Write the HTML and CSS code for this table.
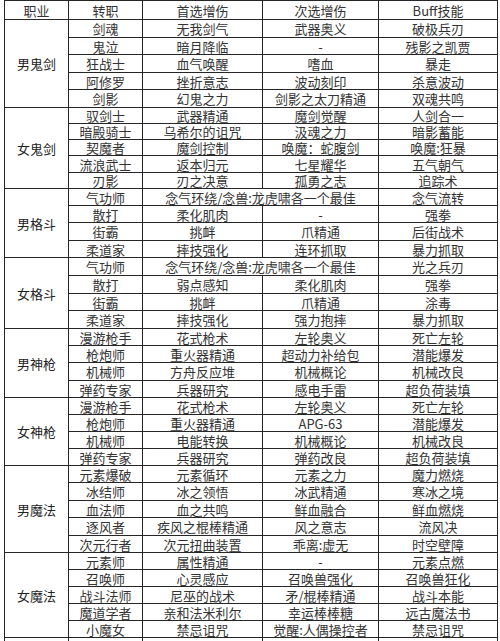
FILE: index.html
```html
<!DOCTYPE html>
<html lang="zh-CN">
<head>
<meta charset="utf-8">
<title>职业增伤与Buff技能</title>
<link rel="stylesheet" href="styles.css">
</head>
<body>
<div class="page">
  <div class="grid" role="table">
    <div class="cell head">职业</div><div class="cell head">转职</div><div class="cell head">首选增伤</div><div class="cell head">次选增伤</div><div class="cell head">Buff技能</div>

    <div class="cell job span5">男鬼剑</div>
    <div class="cell">剑魂</div><div class="cell">无我剑气</div><div class="cell">武器奥义</div><div class="cell">破极兵刃</div>
    <div class="cell">鬼泣</div><div class="cell">暗月降临</div><div class="cell">-</div><div class="cell">残影之凯贾</div>
    <div class="cell">狂战士</div><div class="cell">血气唤醒</div><div class="cell">嗜血</div><div class="cell">暴走</div>
    <div class="cell">阿修罗</div><div class="cell">挫折意志</div><div class="cell">波动刻印</div><div class="cell">杀意波动</div>
    <div class="cell">剑影</div><div class="cell">幻鬼之力</div><div class="cell">剑影之太刀精通</div><div class="cell">双魂共鸣</div>

    <div class="cell job span5">女鬼剑</div>
    <div class="cell">驭剑士</div><div class="cell">武器精通</div><div class="cell">魔剑觉醒</div><div class="cell">人剑合一</div>
    <div class="cell">暗殿骑士</div><div class="cell">乌希尔的诅咒</div><div class="cell">汲魂之力</div><div class="cell">暗影蓄能</div>
    <div class="cell">契魔者</div><div class="cell">魔剑控制</div><div class="cell">唤魔：蛇腹剑</div><div class="cell">唤魔:狂暴</div>
    <div class="cell">流浪武士</div><div class="cell">返本归元</div><div class="cell">七星耀华</div><div class="cell">五气朝气</div>
    <div class="cell">刃影</div><div class="cell">刃之决意</div><div class="cell">孤勇之志</div><div class="cell">追踪术</div>

    <div class="cell job span4">男格斗</div>
    <div class="cell">气功师</div><div class="cell wide">念气环绕/念兽:龙虎啸各一个最佳</div><div class="cell">念气流转</div>
    <div class="cell">散打</div><div class="cell">柔化肌肉</div><div class="cell">-</div><div class="cell">强拳</div>
    <div class="cell">街霸</div><div class="cell">挑衅</div><div class="cell">爪精通</div><div class="cell">后街战术</div>
    <div class="cell">柔道家</div><div class="cell">摔技强化</div><div class="cell">连环抓取</div><div class="cell">暴力抓取</div>

    <div class="cell job span4">女格斗</div>
    <div class="cell">气功师</div><div class="cell wide">念气环绕/念兽:龙虎啸各一个最佳</div><div class="cell">光之兵刃</div>
    <div class="cell">散打</div><div class="cell">弱点感知</div><div class="cell">柔化肌肉</div><div class="cell">强拳</div>
    <div class="cell">街霸</div><div class="cell">挑衅</div><div class="cell">爪精通</div><div class="cell">涂毒</div>
    <div class="cell">柔道家</div><div class="cell">摔技强化</div><div class="cell">强力抱摔</div><div class="cell">暴力抓取</div>

    <div class="cell job span4">男神枪</div>
    <div class="cell">漫游枪手</div><div class="cell">花式枪术</div><div class="cell">左轮奥义</div><div class="cell">死亡左轮</div>
    <div class="cell">枪炮师</div><div class="cell">重火器精通</div><div class="cell">超动力补给包</div><div class="cell">潜能爆发</div>
    <div class="cell">机械师</div><div class="cell">方舟反应堆</div><div class="cell">机械概论</div><div class="cell">机械改良</div>
    <div class="cell">弹药专家</div><div class="cell">兵器研究</div><div class="cell">感电手雷</div><div class="cell">超负荷装填</div>

    <div class="cell job span4">女神枪</div>
    <div class="cell">漫游枪手</div><div class="cell">花式枪术</div><div class="cell">左轮奥义</div><div class="cell">死亡左轮</div>
    <div class="cell">枪炮师</div><div class="cell">重火器精通</div><div class="cell">APG-63</div><div class="cell">潜能爆发</div>
    <div class="cell">机械师</div><div class="cell">电能转换</div><div class="cell">机械概论</div><div class="cell">机械改良</div>
    <div class="cell">弹药专家</div><div class="cell">兵器研究</div><div class="cell">弹药改良</div><div class="cell">超负荷装填</div>

    <div class="cell job span5">男魔法</div>
    <div class="cell">元素爆破</div><div class="cell">元素循环</div><div class="cell">元素之力</div><div class="cell">魔力燃烧</div>
    <div class="cell">冰结师</div><div class="cell">冰之领悟</div><div class="cell">冰武精通</div><div class="cell">寒冰之境</div>
    <div class="cell">血法师</div><div class="cell">血之共鸣</div><div class="cell">鲜血融合</div><div class="cell">鲜血燃烧</div>
    <div class="cell">逐风者</div><div class="cell">疾风之棍棒精通</div><div class="cell">风之意志</div><div class="cell">流风决</div>
    <div class="cell">次元行者</div><div class="cell">次元扭曲装置</div><div class="cell">乖离:虚无</div><div class="cell">时空壁障</div>

    <div class="cell job span5">女魔法</div>
    <div class="cell">元素师</div><div class="cell">属性精通</div><div class="cell">-</div><div class="cell">元素点燃</div>
    <div class="cell">召唤师</div><div class="cell">心灵感应</div><div class="cell">召唤兽强化</div><div class="cell">召唤兽狂化</div>
    <div class="cell">战斗法师</div><div class="cell">尼巫的战术</div><div class="cell">矛/棍棒精通</div><div class="cell">战斗本能</div>
    <div class="cell">魔道学者</div><div class="cell">亲和法米利尔</div><div class="cell">幸运棒棒糖</div><div class="cell">远古魔法书</div>
    <div class="cell">小魔女</div><div class="cell">禁忌诅咒</div><div class="cell">觉醒:人偶操控者</div><div class="cell">禁忌诅咒</div>

    <div class="cell job"></div><div class="cell"></div><div class="cell"></div><div class="cell"></div><div class="cell"></div>
  </div>
</div>
</body>
</html>
```
FILE: styles.css
```css
html, body {
  margin: 0;
  padding: 0;
  background: #ffffff;
  overflow: hidden;
}

.page {
  padding-left: 4px;
  height: 641px;
  overflow: hidden;
}

.grid {
  display: grid;
  width: 494px;
  box-sizing: border-box;
  border-top: 1px solid #262626;
  border-left: 1px solid #262626;
  grid-template-columns: 64px 74px 120px 116px 119px;
  grid-template-rows:
    19px
    18px 17px 18px 17px 18px
    16px 16px 16px 17px 16px
    17px 17px 18px 17px
    18px 18px 17px 18px
    17px 17px 18px 17px
    17px 17px 17px 17px
    17px 18px 17px 18px 17px
    17px 17px 17px 17px 17px
    17px;
  font-family: "Noto Sans CJK SC", sans-serif;
  font-size: 13px;
  line-height: 1;
  color: #333333;
}

.cell {
  box-sizing: border-box;
  border-right: 1px solid #262626;
  border-bottom: 1px solid #262626;
  display: flex;
  align-items: center;
  justify-content: center;
  white-space: nowrap;
  min-width: 0;
  min-height: 0;
}

.job {
  grid-column: 1;
  color: #222222;
}

.span4 { grid-row: span 4; }
.span5 { grid-row: span 5; }

.wide { grid-column: span 2; }
```
